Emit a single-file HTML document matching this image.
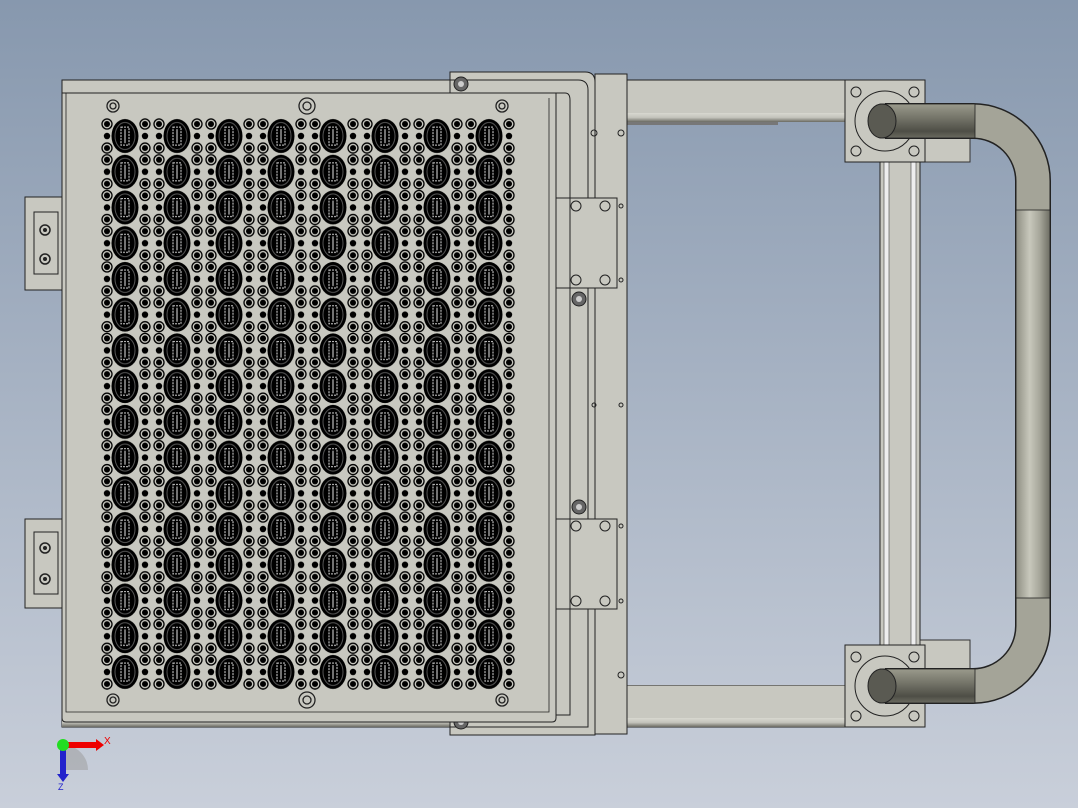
<!DOCTYPE html>
<html><head><meta charset="utf-8"><style>
html,body{margin:0;padding:0;width:1078px;height:808px;overflow:hidden}
svg{display:block}
</style></head><body>
<svg width="1078" height="808" viewBox="0 0 1078 808" xmlns="http://www.w3.org/2000/svg">
<defs>
<linearGradient id="bg" x1="0" y1="0" x2="0" y2="808" gradientUnits="userSpaceOnUse">
<stop offset="0" stop-color="#8798ae"/><stop offset="1" stop-color="#c9cfda"/></linearGradient>
<linearGradient id="tubeH" x1="0" y1="0" x2="0" y2="1">
<stop offset="0" stop-color="#9a9a8c"/><stop offset="0.35" stop-color="#7a7a6e"/><stop offset="0.8" stop-color="#4e4e46"/><stop offset="1" stop-color="#6a6a60"/></linearGradient>
<linearGradient id="tubeV" x1="0" y1="0" x2="1" y2="0">
<stop offset="0" stop-color="#8e8e82"/><stop offset="0.4" stop-color="#c8c8bc"/><stop offset="0.7" stop-color="#a6a69a"/><stop offset="1" stop-color="#6e6e64"/></linearGradient>
<linearGradient id="rail" x1="0" y1="0" x2="0" y2="1">
<stop offset="0" stop-color="#d8d8d0"/><stop offset="0.5" stop-color="#c4c4bc"/><stop offset="1" stop-color="#6a6a62"/></linearGradient>
<pattern id="grid" x="99" y="118.13" width="52" height="35.73" patternUnits="userSpaceOnUse">
<g fill="none" stroke="#000" stroke-width="1.3">
<circle cx="8" cy="5.9" r="5"/><circle cx="46" cy="5.9" r="5"/>
<circle cx="8" cy="29.9" r="5"/><circle cx="46" cy="29.9" r="5"/>
</g>
<g fill="#000">
<circle cx="8" cy="5.9" r="3"/><circle cx="46" cy="5.9" r="3"/>
<circle cx="8" cy="29.9" r="3"/><circle cx="46" cy="29.9" r="3"/>
<circle cx="8" cy="17.9" r="3.2"/><circle cx="46" cy="17.9" r="3.2"/>
<ellipse cx="26" cy="17.9" rx="13.5" ry="17"/>
</g>
<ellipse cx="26" cy="17.9" rx="10" ry="13.5" fill="none" stroke="#555" stroke-width="1"/>
<rect x="22" y="9" width="8" height="18" fill="none" stroke="#bbb" stroke-width="1.2" stroke-dasharray="2 1"/>
<line x1="26" y1="11" x2="26" y2="25" stroke="#999" stroke-width="1.5"/>
</pattern>
</defs>
<rect width="1078" height="808" fill="url(#bg)"/>

<!-- right blocks -->
<rect x="778" y="125" width="68" height="60" fill="#c6c6be" stroke="#555" stroke-width="0.8"/>
<rect x="778" y="622" width="68" height="63" fill="#c6c6be" stroke="#555" stroke-width="0.8"/>

<!-- rails -->
<rect x="62" y="80" width="786" height="42" fill="#c8c8c0" stroke="#222" stroke-width="1"/>
<rect x="62" y="113" width="786" height="9" fill="url(#rail)"/>
<rect x="62" y="685" width="786" height="42" fill="#c8c8c0" stroke="#222" stroke-width="1"/>
<rect x="62" y="718" width="786" height="9" fill="url(#rail)"/>
<rect x="627" y="122" width="220" height="563" fill="url(#bg)"/>
<rect x="627" y="122" width="151" height="3" fill="#777"/>

<!-- right posts -->
<rect x="880" y="160" width="40" height="490" fill="#c8c8c0" stroke="#222"/>
<rect x="884" y="160" width="5" height="490" fill="#eee" stroke="#444" stroke-width="0.6"/>
<rect x="911" y="160" width="5" height="490" fill="#eee" stroke="#444" stroke-width="0.6"/>
<rect x="920" y="134" width="50" height="28" fill="#c8c8c0" stroke="#333"/>
<rect x="920" y="640" width="50" height="30" fill="#c8c8c0" stroke="#333"/>

<!-- left tabs -->
<rect x="25" y="197" width="40" height="93" fill="#c8c8c0" stroke="#222"/>
<rect x="34" y="212" width="24" height="62" fill="#c8c8c0" stroke="#222"/>
<rect x="25" y="519" width="40" height="89" fill="#c8c8c0" stroke="#222"/>
<rect x="34" y="532" width="24" height="62" fill="#c8c8c0" stroke="#222"/>
<g fill="none" stroke="#222" stroke-width="1.5"><circle cx="45" cy="230" r="5"/><circle cx="45" cy="259" r="5"/><circle cx="45" cy="548" r="5"/><circle cx="45" cy="579" r="5"/></g>
<g fill="#222"><circle cx="45" cy="230" r="2"/><circle cx="45" cy="259" r="2"/><circle cx="45" cy="548" r="2"/><circle cx="45" cy="579" r="2"/></g>

<!-- middle frame -->
<path d="M450 72 H585 Q595 72 595 82 V735 H450 Z" fill="#c8c8c0" stroke="#222"/>
<rect x="595" y="74" width="32" height="660" fill="#c8c8c0" stroke="#222"/>
<path d="M450 80 H578 Q588 80 588 90 V727 H450" fill="none" stroke="#222"/>
<rect x="555" y="198" width="62" height="90" fill="#c8c8c0" stroke="#222"/>
<rect x="555" y="519" width="62" height="90" fill="#c8c8c0" stroke="#222"/>
<path d="M555 93 H565 Q570 93 570 100 V715 H555" fill="none" stroke="#222"/>
<g fill="none" stroke="#222"><circle cx="576" cy="206" r="5"/><circle cx="576" cy="280" r="5"/><circle cx="605" cy="206" r="5"/><circle cx="605" cy="280" r="5"/><circle cx="576" cy="526" r="5"/><circle cx="576" cy="601" r="5"/><circle cx="605" cy="526" r="5"/><circle cx="605" cy="601" r="5"/>
<circle cx="621" cy="133" r="3"/><circle cx="621" cy="206" r="2"/><circle cx="621" cy="280" r="2"/><circle cx="621" cy="405" r="2"/><circle cx="621" cy="526" r="2"/><circle cx="621" cy="601" r="2"/><circle cx="621" cy="675" r="3"/><circle cx="594" cy="133" r="3"/><circle cx="594" cy="405" r="2"/></g>
<g fill="#666" stroke="#222"><circle cx="461" cy="84" r="7"/><circle cx="461" cy="722" r="7"/><circle cx="579" cy="299" r="7"/><circle cx="579" cy="507" r="7"/></g>
<g fill="#ccc"><circle cx="461" cy="84" r="3"/><circle cx="461" cy="722" r="3"/><circle cx="579" cy="299" r="3"/><circle cx="579" cy="507" r="3"/></g>

<!-- main plate -->
<path d="M62 93 V718 Q62 722 66 722 H552 Q556 722 556 718 V93 Z" fill="#c8c8c0" stroke="#222"/>
<path d="M66 93 V712 H549 V98" fill="none" stroke="#222" stroke-width="0.8"/>
<rect x="99" y="118" width="417" height="572" fill="url(#grid)"/>
<g fill="none" stroke="#222" stroke-width="1.3">
<circle cx="113" cy="106" r="6"/><circle cx="113" cy="106" r="3"/>
<circle cx="307" cy="106" r="8"/><circle cx="307" cy="106" r="4"/>
<circle cx="502" cy="106" r="6"/><circle cx="502" cy="106" r="3"/>
<circle cx="113" cy="700" r="6"/><circle cx="113" cy="700" r="3"/>
<circle cx="307" cy="700" r="8"/><circle cx="307" cy="700" r="4"/>
<circle cx="502" cy="700" r="6"/><circle cx="502" cy="700" r="3"/>
</g>

<!-- flanges -->
<g stroke="#222" fill="#c8c8c0">
<rect x="845" y="80" width="80" height="82"/>
<rect x="845" y="645" width="80" height="82"/>
</g>
<g fill="none" stroke="#222">
<circle cx="885" cy="121" r="30"/><circle cx="885" cy="686" r="30"/>
<circle cx="856" cy="92" r="5"/><circle cx="914" cy="92" r="5"/><circle cx="856" cy="151" r="5"/><circle cx="914" cy="151" r="5"/>
<circle cx="856" cy="657" r="5"/><circle cx="914" cy="657" r="5"/><circle cx="856" cy="716" r="5"/><circle cx="914" cy="716" r="5"/>
</g>

<!-- handle -->
<path d="M885 121 H973 A60 60 0 0 1 1033 181 V626 A60 60 0 0 1 973 686 H885" fill="none" stroke="#222" stroke-width="36"/>
<path d="M885 121 H973 A60 60 0 0 1 1033 181 V626 A60 60 0 0 1 973 686 H885" fill="none" stroke="#a4a498" stroke-width="33"/>
<rect x="1016" y="210" width="34" height="388" fill="url(#tubeV)" stroke="#222" stroke-width="0.8"/>
<rect x="880" y="104" width="95" height="34" fill="url(#tubeH)" stroke="#222" stroke-width="0.8"/>
<rect x="880" y="669" width="95" height="34" fill="url(#tubeH)" stroke="#222" stroke-width="0.8"/>
<ellipse cx="882" cy="121" rx="14" ry="17" fill="#5a5a52" stroke="#222"/>
<ellipse cx="882" cy="686" rx="14" ry="17" fill="#5a5a52" stroke="#222"/>

<!-- triad -->
<path d="M63 745 A25 25 0 0 1 88 770 L63 770 Z" fill="#999" opacity="0.5"/>
<rect x="63" y="742" width="34" height="6" fill="#e00"/><path d="M96 739 L104 745 L96 751 Z" fill="#e00"/>
<rect x="60" y="745" width="6" height="30" fill="#22c"/><path d="M57 774 L63 782 L69 774 Z" fill="#22c"/>
<circle cx="63" cy="745" r="6" fill="#2d2"/>
<text x="104" y="744" font-family="Liberation Sans, sans-serif" font-size="10" fill="#e00">X</text>
<text x="58" y="790" font-family="Liberation Sans, sans-serif" font-size="9" fill="#22c">Z</text>
</svg>
</body></html>
